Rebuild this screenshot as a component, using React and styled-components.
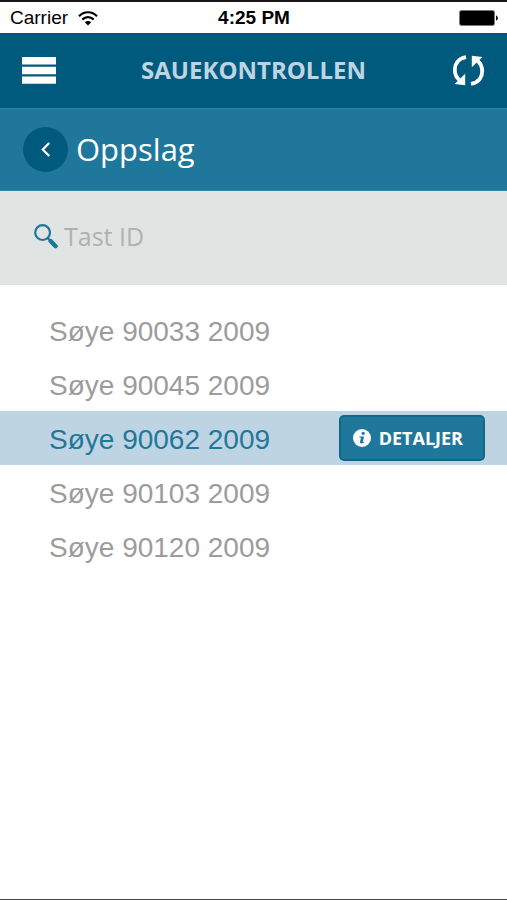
import React, { useState } from 'react'
import styled, { createGlobalStyle } from 'styled-components'

const GlobalStyle = createGlobalStyle`
    :root {
        --colorDark: #005a7d;
        --colorPrimary: #1f789b;
        --colorLight: #bfd4e3;
        --text-color: #9c9c9c;
    }

    * {
        box-sizing: border-box;
    }

    body {
        margin: 0;
        background: #fff;
        font-family: "Open Sans", sans-serif;
    }

    button {
        border: none;
        padding: 0;
        font-family: inherit;
        cursor: pointer;
    }
`;

const Screen = styled.div`
    display: flex;
    flex-direction: column;
    min-height: 100vh;
    border-top: 2px solid #1a1418;
    border-bottom: 1px solid #444;
`;

const StatusBar = styled.div`
    display: grid;
    grid-template-columns: 1fr auto 1fr;
    align-items: center;
    height: 31px;
    padding: 1px 9px 0 10px;
    color: #000;
    font-family: "Liberation Sans", Arial, sans-serif;
    font-size: 19px;
`;

const Carrier = styled.span`
    display: flex;
    align-items: center;
    gap: 10px;
`;

const Clock = styled.time`
    font-weight: bold;
`;

const Battery = styled.svg`
    justify-self: end;
`;

const Header = styled.header`
    display: grid;
    grid-template-columns: 1fr auto 1fr;
    align-items: center;
    height: 75px;
    padding: 0 22px;
    background: var(--colorDark);
`;

const Title = styled.h1`
    margin: 0;
    padding-bottom: 2px;
    color: var(--colorLight);
    font-size: 24px;
    font-weight: 700;
    line-height: 32px;
`;

const IconButton = styled.button`
    display: flex;
    justify-self: ${props => props.$side};
    background: none;
    color: #fff;
`;

const SubHeader = styled.div`
    display: flex;
    align-items: center;
    gap: 8px;
    height: 83px;
    padding: 0 23px;
    background: var(--colorPrimary);
    border-top: 1px solid #3486a5;
    border-bottom: 1px solid #3486a5;
`;

const BackButton = styled.button`
    display: flex;
    align-items: center;
    justify-content: center;
    width: 45px;
    height: 45px;
    border-radius: 50%;
    background: var(--colorDark);
`;

const PageName = styled.h2`
    margin: 0;
    padding-bottom: 2px;
    color: #fff;
    font-size: 31px;
    font-weight: 400;
    line-height: 44px;
`;

const SearchBar = styled.label`
    display: flex;
    align-items: center;
    gap: 6px;
    height: 94px;
    padding: 0 34px 4px;
    background: #e0e5e4;
`;

const SearchInput = styled.input`
    flex: 1;
    min-width: 0;
    padding: 0;
    border: none;
    outline: none;
    background: none;
    color: var(--colorPrimary);
    font-family: inherit;
    font-size: 25px;

    &::placeholder {
        color: #b0b1b1;
        opacity: 1;
    }
`;

const List = styled.ul`
    margin: 0;
    padding: 18px 0;
    list-style: none;
`;

const Item = styled.li`
    display: flex;
    align-items: center;
    height: 54px;
    padding-right: 22px;
    background: ${props => props.$selected ? 'var(--colorLight)' : 'none'};
`;

const ItemName = styled.button`
    flex: 1;
    height: 100%;
    padding: 4px 0 0 49px;
    background: none;
    color: ${props => props.$selected ? 'var(--colorPrimary)' : 'var(--text-color)'};
    font-family: "Liberation Sans", Arial, sans-serif;
    font-size: 28px;
    text-align: left;
`;

const DetailsButton = styled.button`
    display: flex;
    align-items: center;
    gap: 8px;
    height: 46px;
    padding: 0 20px 0 12px;
    border: 2px solid #12668a;
    border-radius: 5px;
    background: var(--colorPrimary);
    color: #fff;
    font-size: 18px;
    font-weight: 700;
`;

const sheep = [
    'Søye 90033 2009',
    'Søye 90045 2009',
    'Søye 90062 2009',
    'Søye 90103 2009',
    'Søye 90120 2009',
];

const WifiIcon = () => (
    <svg width="20" height="15" viewBox="0 0 20 15" fill="none" stroke="#000" strokeWidth="2.2" aria-hidden="true">
        <path d="M1 5.2C6-.1 14-.1 19 5.2" />
        <path d="M4.3 8.6c3.3-3.3 8.1-3.3 11.4 0" />
        <path d="M10 14.6 6.8 11.3c1.8-1.7 4.6-1.7 6.4 0z" fill="#000" stroke="none" />
    </svg>
);

const BatteryIcon = () => (
    <Battery width="39" height="16" viewBox="0 0 39 16" aria-hidden="true">
        <rect x=".5" y=".5" width="35" height="15" rx="2" fill="#000" stroke="#777" />
        <path d="M37 5.5c2.4.6 2.4 4.4 0 5z" fill="#000" />
    </Battery>
);

const MenuIcon = () => (
    <svg width="34" height="27" viewBox="0 0 34 27" fill="currentColor" aria-hidden="true">
        <path d="M0 0h34v7.4H0zM0 9.8h34v7.4H0zM0 19.4h34v7.4H0z" />
    </svg>
);

const RefreshIcon = () => (
    <svg width="33" height="32" viewBox="0 0 33 32" fill="none" aria-hidden="true">
        <path d="M14 2.2C5.4 3.5 2.8 10 2.8 15c0 4 2 8 5 10.5" stroke="currentColor" strokeWidth="3.8" />
        <path d="M13.2 18.8V30.2L2.6 29z" fill="currentColor" />
        <path d="M19 28.8C27.6 27.5 30.2 21 30.2 16c0-4-2-8-5-10.5" stroke="currentColor" strokeWidth="3.8" />
        <path d="M19.8 12.2V.8L30.4 2z" fill="currentColor" />
    </svg>
);

const BackIcon = () => (
    <svg width="10" height="15" viewBox="0 0 10 15" fill="none" stroke="#fff" strokeWidth="2.2" aria-hidden="true">
        <path d="M8.2 1 1.8 7.5 8.2 14" />
    </svg>
);

const SearchIcon = () => (
    <svg width="24" height="25" viewBox="0 0 24 25" fill="none" stroke="#1f789b" aria-hidden="true">
        <circle cx="8.6" cy="8.6" r="7.4" strokeWidth="2.2" />
        <path d="m13.8 14.2 3 3" strokeWidth="2.2" />
        <path d="m16.6 17 5 5.2" strokeWidth="4.4" strokeLinecap="round" />
    </svg>
);

const InfoIcon = () => (
    <svg width="18" height="18" viewBox="0 0 18 18" aria-hidden="true">
        <circle cx="9" cy="9" r="9" fill="#fff" />
        <circle cx="10.2" cy="4.3" r="1.6" fill="#1f789b" />
        <path d="M6.6 7.4h4.5l-1.3 5.5 1.6-.5-.3 1.1c-1.6 1.1-4.6 1.5-4.1-.7l1-4.2-1.6.1z" fill="#1f789b" />
    </svg>
);

const App = () => {
    const [query, setQuery] = useState('');
    const [selected, setSelected] = useState('Søye 90062 2009');

    return (
        <Screen>
            <GlobalStyle />
            <StatusBar>
                <Carrier>Carrier <WifiIcon /></Carrier>
                <Clock>4:25 PM</Clock>
                <BatteryIcon />
            </StatusBar>
            <Header>
                <IconButton $side="start" aria-label="Meny"><MenuIcon /></IconButton>
                <Title>SAUEKONTROLLEN</Title>
                <IconButton $side="end" aria-label="Oppdater"><RefreshIcon /></IconButton>
            </Header>
            <SubHeader>
                <BackButton aria-label="Tilbake"><BackIcon /></BackButton>
                <PageName>Oppslag</PageName>
            </SubHeader>
            <SearchBar>
                <SearchIcon />
                <SearchInput
                    aria-label="Tast ID"
                    placeholder="Tast ID"
                    value={query}
                    onChange={e => setQuery(e.target.value)}
                />
            </SearchBar>
            <List>
                {sheep.filter(name => name.includes(query)).map(name => (
                    <Item key={name} $selected={name === selected}>
                        <ItemName $selected={name === selected} onClick={() => setSelected(name)}>
                            {name}
                        </ItemName>
                        {name === selected && (
                            <DetailsButton><InfoIcon /> DETALJER</DetailsButton>
                        )}
                    </Item>
                ))}
            </List>
        </Screen>
    )
};

export default App;
